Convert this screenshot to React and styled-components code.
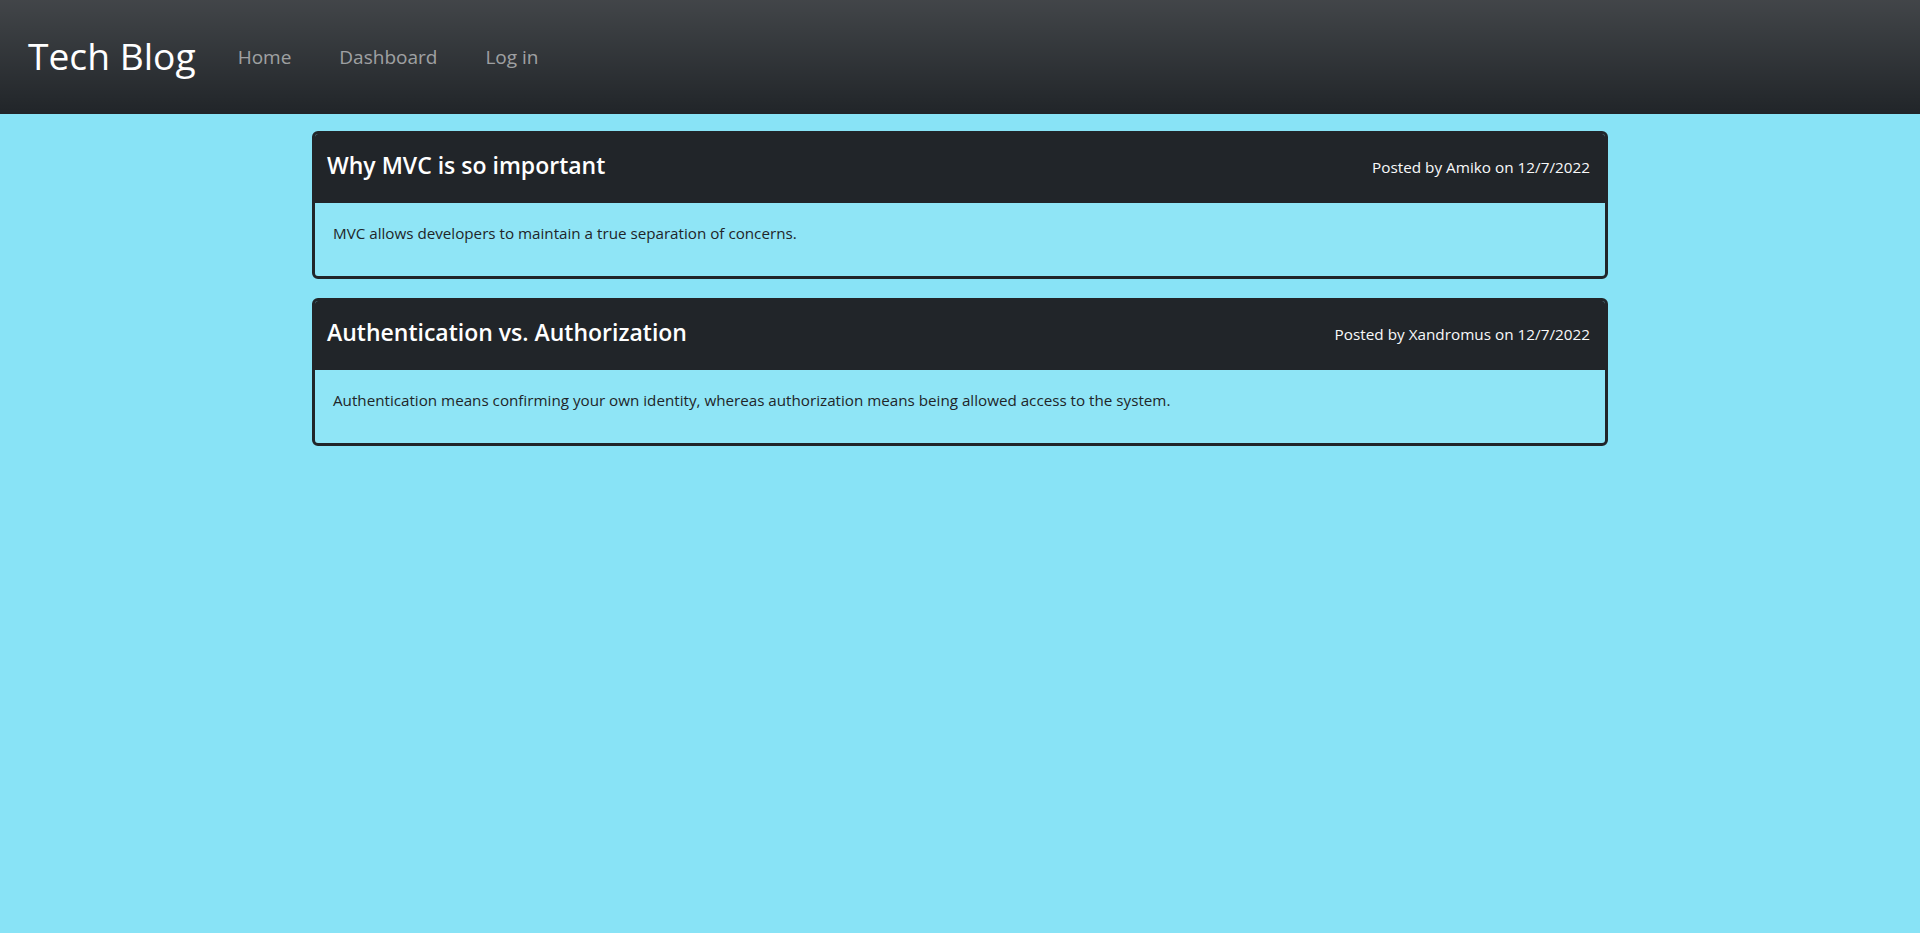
import React from 'react'
import styled, { createGlobalStyle } from 'styled-components'

const GlobalStyle = createGlobalStyle`
  html, body {
    margin: 0;
    padding: 0;
  }
  body {
    min-height: 100vh;
    background: #88e3f6;
    font-family: "Open Sans", "Noto Sans", sans-serif;
    color: #212529;
  }
`

const posts = [
  {
    id: 1,
    title: 'Why MVC is so important',
    author: 'Amiko',
    date: '12/7/2022',
    body: 'MVC allows developers to maintain a true separation of concerns.',
  },
  {
    id: 2,
    title: 'Authentication vs. Authorization',
    author: 'Xandromus',
    date: '12/7/2022',
    body: 'Authentication means confirming your own identity, whereas authorization means being allowed access to the system.',
  },
]

const Navbar = styled.nav`
  height: 114px;
  box-sizing: border-box;
  display: flex;
  align-items: center;
  padding: 0 24px 0 28px;
  background: #212529 linear-gradient(180deg, rgba(255, 255, 255, 0.15), rgba(255, 255, 255, 0));
`

const Brand = styled.h1`
  margin: 0 18px 4px 0;
  font-size: 37.2px;
  font-weight: 400;
  color: #fff;
`

const NavList = styled.ul`
  display: flex;
  list-style: none;
  margin: 0;
  padding: 0;
`

const NavLink = styled.a`
  display: block;
  padding: 8px 24px;
  font-size: 19px;
  color: rgba(255, 255, 255, 0.55);
  text-decoration: none;
`

const Container = styled.main`
  width: 1296px;
  margin: 17px auto 0;
  display: flex;
  flex-direction: column;
  gap: 19px;
`

const Card = styled.article`
  border: 3px solid #212529;
  border-radius: 6px;
  overflow: hidden;
  background: #8fe5f6;
`

const CardHeader = styled.header`
  height: 69px;
  box-sizing: border-box;
  display: flex;
  align-items: center;
  justify-content: space-between;
  padding: 0 15px 0 12px;
  background: #212529;
`

const Title = styled.h4`
  margin: 0 0 8px;
  font-size: 23px;
  font-weight: 600;
  color: #fff;
`

const Meta = styled.p`
  margin: 0 0 4px;
  font-size: 15.3px;
  color: #f8f9fa;
`

const CardBody = styled.div`
  padding: 18px 16px 15px 18px;
`

const Text = styled.p`
  margin: 0 0 16px;
  font-size: 15.2px;
  line-height: 24px;
`

const App = () => {
  return (
    <>
      <GlobalStyle />
      <Navbar>
        <Brand>Tech Blog</Brand>
        <NavList>
          <li><NavLink href="#">Home</NavLink></li>
          <li><NavLink href="#">Dashboard</NavLink></li>
          <li><NavLink href="#">Log in</NavLink></li>
        </NavList>
      </Navbar>
      <Container>
        {posts.map((post) => (
          <Card key={post.id}>
            <CardHeader>
              <Title>{post.title}</Title>
              <Meta>Posted by {post.author} on {post.date}</Meta>
            </CardHeader>
            <CardBody>
              <Text>{post.body}</Text>
            </CardBody>
          </Card>
        ))}
      </Container>
    </>
  )
}

export default App
